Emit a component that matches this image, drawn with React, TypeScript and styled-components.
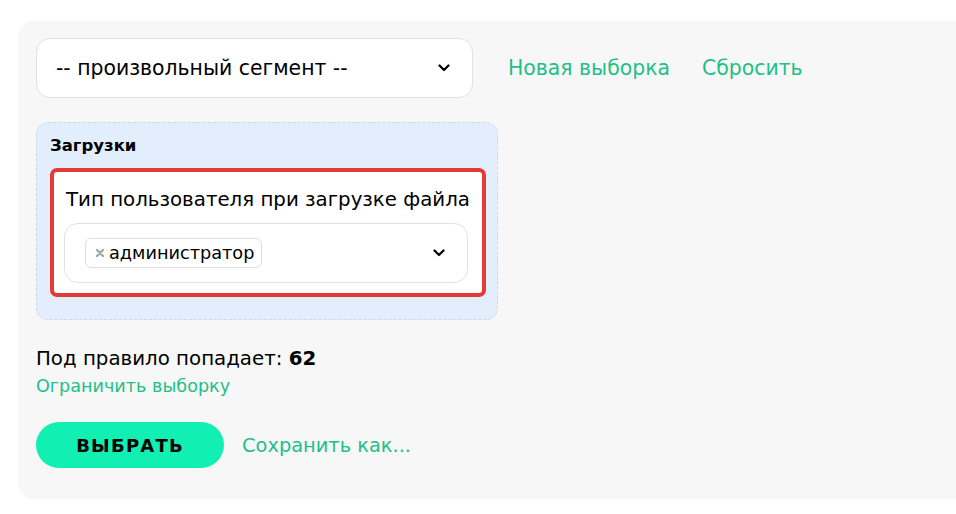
import React from "react";
import styled, { createGlobalStyle } from "styled-components";

const GlobalStyle = createGlobalStyle`
    html, body {
        margin: 0;
        padding: 0;
        background: #ffffff;
    }
    body {
        font-family: "DejaVu Sans", "Noto Sans", Arial, sans-serif;
        color: #000;
    }
`;

const Page = styled.div`
    padding: 21px 0 16px 18px;
    width: 956px;
    box-sizing: border-box;
    overflow: hidden;
`;

const Panel = styled.div`
    width: 960px;
    box-sizing: border-box;
    background: #f7f7f7;
    border-radius: 16px;
    padding: 17px 18px 31px 18px;
`;

const TopRow = styled.div`
    display: flex;
    align-items: center;
    gap: 35px;
`;

const Links = styled.div`
    display: flex;
    align-items: center;
    gap: 32px;
`;

const Select = styled.div<{ $width: number; $padLeft: number }>`
    width: ${p => p.$width}px;
    height: 60px;
    box-sizing: border-box;
    display: flex;
    align-items: center;
    justify-content: space-between;
    padding: 0 22px 0 ${p => p.$padLeft}px;
    background: #fff;
    border: 1px solid #e1e1e1;
    border-radius: 14px;
`;

const SelectText = styled.span`
    font-size: 20.4px;
`;

const Link = styled.a<{ $size: number }>`
    color: #1fbf88;
    font-size: ${p => p.$size}px;
    text-decoration: none;
    white-space: nowrap;
    cursor: pointer;
`;

const Group = styled.div`
    margin-top: 24px;
    width: 462px;
    box-sizing: border-box;
    background: #e2eefb;
    border: 1px dashed #cfd9e4;
    border-radius: 12px;
    padding: 12px 11px 22px 13px;
`;

const GroupTitle = styled.div`
    font-size: 16.5px;
    font-weight: 700;
    line-height: 22px;
    margin-bottom: 11px;
`;

const Highlight = styled.div`
    background: #fff;
    border: 4px solid #e53a33;
    border-radius: 7px;
    padding: 15px 14px 10px 10px;
`;

const FieldLabel = styled.div`
    font-size: 19.8px;
    line-height: 26px;
    white-space: nowrap;
    padding-left: 2px;
    margin-bottom: 10px;
`;

const Tag = styled.span`
    display: inline-flex;
    align-items: center;
    gap: 4px;
    height: 30px;
    box-sizing: border-box;
    padding: 0 7px 0 9px;
    border: 1px solid #dedede;
    border-radius: 6px;
    font-size: 17.7px;
`;

const TagRemove: React.FC = () => (
    <svg width="10" height="10" viewBox="0 0 10 10">
        <path d="M2 2 L8 8 M8 2 L2 8" stroke="#a3a3a3" strokeWidth="2.4" strokeLinecap="round" />
    </svg>
);

const Summary = styled.div`
    margin-top: 27px;
    font-size: 19.8px;
    line-height: 24px;
`;

const Count = styled.b`
    font-weight: 700;
`;

const LimitLink = styled(Link)`
    display: block;
    margin-top: 4px;
    line-height: 22px;
`;

const Actions = styled.div`
    margin-top: 25px;
    display: flex;
    align-items: center;
    gap: 18px;
`;

const PrimaryButton = styled.button`
    width: 188px;
    height: 46px;
    border: none;
    border-radius: 23px;
    background: #11f0b2;
    font-family: inherit;
    font-size: 18px;
    font-weight: 700;
    letter-spacing: 1.2px;
    color: #000;
    cursor: pointer;
`;

const Chevron: React.FC = () => (
    <svg width="12" height="8" viewBox="0 0 12 8" fill="none">
        <path d="M1.5 1.5 L6 6 L10.5 1.5" stroke="#000" strokeWidth="2.2" strokeLinecap="round" strokeLinejoin="round" />
    </svg>
);

export default function App() {
    return (
        <>
            <GlobalStyle />
            <Page>
                <Panel>
                    <TopRow>
                        <Select $width={437} $padLeft={19}>
                            <SelectText>-- произвольный сегмент --</SelectText>
                            <Chevron />
                        </Select>
                        <Links>
                            <Link $size={20.4}>Новая выборка</Link>
                            <Link $size={20.4}>Сбросить</Link>
                        </Links>
                    </TopRow>
                    <Group>
                        <GroupTitle>Загрузки</GroupTitle>
                        <Highlight>
                            <FieldLabel>Тип пользователя при загрузке файла</FieldLabel>
                            <Select $width={404} $padLeft={20}>
                                <Tag>
                                    <TagRemove />
                                    администратор
                                </Tag>
                                <Chevron />
                            </Select>
                        </Highlight>
                    </Group>
                    <Summary>
                        Под правило попадает: <Count>62</Count>
                    </Summary>
                    <LimitLink $size={17.6}>Ограничить выборку</LimitLink>
                    <Actions>
                        <PrimaryButton>ВЫБРАТЬ</PrimaryButton>
                        <Link $size={19.4}>Сохранить как...</Link>
                    </Actions>
                </Panel>
            </Page>
        </>
    );
}
